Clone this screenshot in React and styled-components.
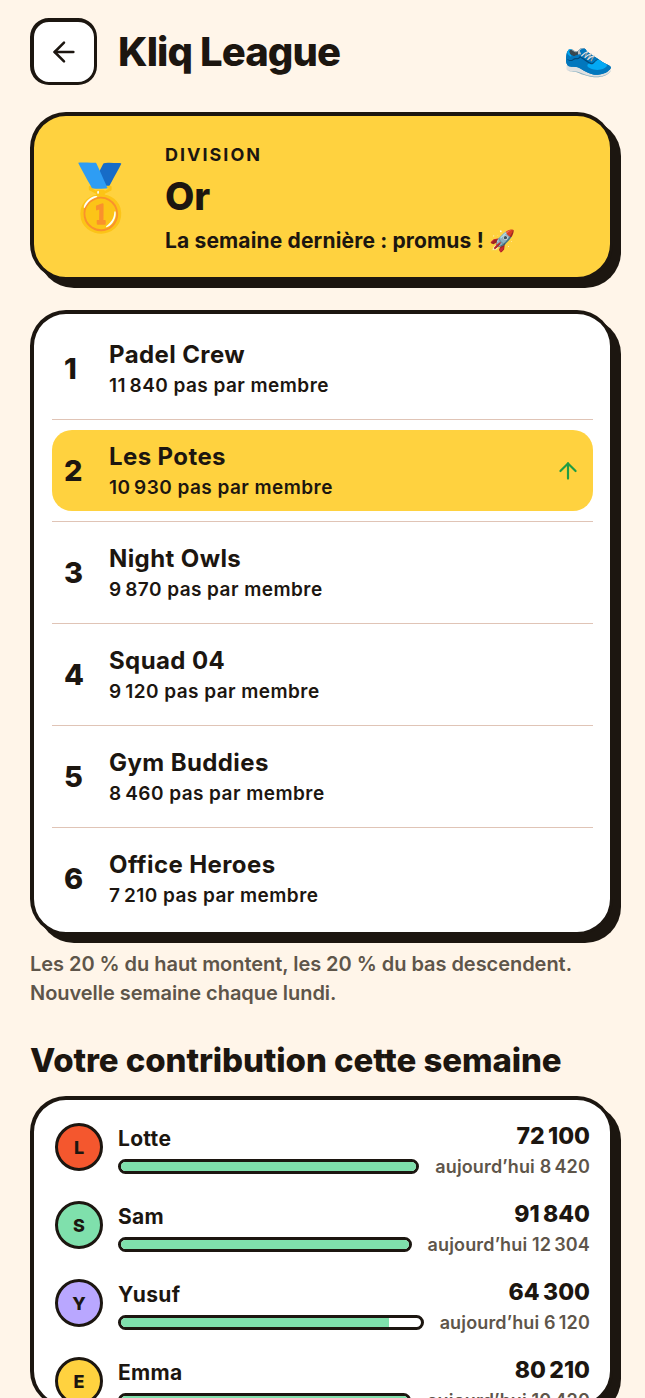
import React from "react";
import styled, { createGlobalStyle } from "styled-components";

const Global = createGlobalStyle`
  html, body { margin: 0; padding: 0; background: #fff5e9; height: 1398px; overflow: hidden; }
  body { font-family: "Inter", "Noto Sans", sans-serif; color: #1c1610; }
`;
const Page = styled.div`
  width: 583px; padding: 18px 0 0 30px; display: flex; flex-direction: column;
`;
const Header = styled.header`
  display: flex; align-items: center; gap: 21px; height: 67px; margin-bottom: 27px;
`;
const BackButton = styled.div`
  width: 67px; height: 67px; box-sizing: border-box; border: solid #1c1610; border-width: 4px 3px 3px 4px; border-radius: 19px;
  background: #fff; display: flex; align-items: center; justify-content: center;
`;
const Title = styled.h1`
  flex: 1; margin: 0; font-size: 40px; line-height: 48px; font-weight: 800; letter-spacing: -.9px;
`;
const Shoe = styled.div`
  font-size: 41px; line-height: 48px; margin-right: -1px; margin-top: 4px;
`;
const Card = styled.section`
  box-sizing: border-box; border: solid #1c1610; border-width: 4px 3px 3px 4px; border-radius: 36px;
  background: ${p => p.$bg || "#fff"}; box-shadow: 8px 8px 0 #1c1610;
`;
const DivisionCard = styled(Card)`
  height: 168px; display: flex; align-items: center; padding-left: 27px; gap: 34px; margin-bottom: 30px;
`;
const Medal = styled.div` font-size: 64px; line-height: 80px; width: 70px; text-align: center; `;
const DivisionText = styled.div` display: flex; flex-direction: column; padding-top: 7px; `;
const Eyebrow = styled.div` font-size: 18px; line-height: 24px; font-weight: 700; letter-spacing: 2px; `;
const DivisionName = styled.div` font-size: 38px; line-height: 58px; font-weight: 800; `;
const DivisionNote = styled.div` font-size: 21px; line-height: 32px; font-weight: 700; letter-spacing: .15px; `;
const RankCard = styled(Card)` padding: 14px 17px 13px 18px; margin-bottom: 15px; `;
const Row = styled.div`
  display: flex; align-items: center; height: 81px; padding: 0 12px 0 12px; border-radius: 20px;
  background: ${p => (p.$me ? "#ffd23f" : "transparent")};
`;
const Divider = styled.div` height: 1px; background: #e0c4b6; margin: 10px 0; `;
const Rank = styled.div` width: 45px; font-size: 29px; font-weight: 800; `;
const RowText = styled.div` flex: 1; padding-top: 3px; `;
const TeamName = styled.div` font-size: 24px; line-height: 31px; font-weight: 700; letter-spacing: .4px; `;
const TeamSteps = styled.div` font-size: 19px; line-height: 31px; font-weight: 600; letter-spacing: .45px; `;
const Note = styled.p`
  margin: 0 0 30px; font-size: 20px; line-height: 29px; font-weight: 600; letter-spacing: -.04px; color: #5e554a;
`;
const Heading = styled.h2`
  margin: 0 0 14px; font-size: 33px; line-height: 44px; font-weight: 800; letter-spacing: -.1px;
`;
const ContribCard = styled(Card)` padding: 22px 20px 0 21px; display: flex; flex-direction: column; gap: 30px; `;
const Person = styled.div` display: flex; align-items: flex-start; gap: 15px; height: 48px; `;
const Avatar = styled.div`
  width: 48px; height: 48px; box-sizing: border-box; flex: none; margin-top: 1px; border: 3px solid #1c1610; border-radius: 50%;
  background: ${p => p.$bg}; display: flex; align-items: center; justify-content: center;
  font-size: 18px; font-weight: 800;
`;
const PersonBody = styled.div` flex: 1; display: flex; flex-direction: column; gap: 2px; `;
const Line = styled.div` display: flex; align-items: center; justify-content: space-between; gap: 16px; height: 28px; `;
const Name = styled.div` font-size: 21px; font-weight: 700; padding-top: 4px; letter-spacing: .3px; `;
const Total = styled.div` font-size: 23px; font-weight: 800; `;
const Bar = styled.div`
  flex: 1; height: 15px; box-sizing: border-box; border: 3px solid #1c1610; border-radius: 8px; background: #fff; overflow: hidden;
`;
const Fill = styled.div` height: 100%; background: #7fe0ac; `;
const Today = styled.div` font-size: 18px; font-weight: 600; letter-spacing: .15px; color: #5e554a; white-space: nowrap; `;

const teams = [
  ["1", "Padel Crew", "11\u202f840"], ["2", "Les Potes", "10\u202f930", true], ["3", "Night Owls", "9\u202f870"],
  ["4", "Squad 04", "9\u202f120"], ["5", "Gym Buddies", "8\u202f460"], ["6", "Office Heroes", "7\u202f210"],
];
const people = [
  ["L", "Lotte", "72\u202f100", "8\u202f420", "#f4572e", 100], ["S", "Sam", "91\u202f840", "12\u202f304", "#7fe0ac", 100],
  ["Y", "Yusuf", "64\u202f300", "6\u202f120", "#b9a7ff", 89.3], ["E", "Emma", "80\u202f210", "10\u202f420", "#ffd23f", 100],
];

export default function App() {
  return (
    <Page>
      <Global />
      <Header>
        <BackButton>
          <svg width="32" height="32" viewBox="0 0 24 24" fill="none" stroke="#1c1610" strokeWidth="1.9" strokeLinecap="round" strokeLinejoin="round">
            <path d="m12 19-7-7 7-7" /><path d="M19 12H5" />
          </svg>
        </BackButton>
        <Title>Kliq League</Title>
        <Shoe>👟</Shoe>
      </Header>
      <DivisionCard $bg="#ffd23f">
        <Medal>🥇</Medal>
        <DivisionText>
          <Eyebrow>DIVISION</Eyebrow>
          <DivisionName>Or</DivisionName>
          <DivisionNote>La semaine dernière : promus ! 🚀</DivisionNote>
        </DivisionText>
      </DivisionCard>
      <RankCard>
        {teams.map(([r, n, s, me], i) => (
          <React.Fragment key={r}>
            {i > 0 && <Divider />}
            <Row $me={me}>
              <Rank>{r}</Rank>
              <RowText>
                <TeamName>{n}</TeamName>
                <TeamSteps>{s} pas par membre</TeamSteps>
              </RowText>
              {me && (
                <svg width="26" height="26" viewBox="0 0 24 24" fill="none" stroke="#1f9d45" strokeWidth="2" strokeLinecap="round" strokeLinejoin="round">
                  <path d="m5 12 7-7 7 7" /><path d="M12 19V5" />
                </svg>
              )}
            </Row>
          </React.Fragment>
        ))}
      </RankCard>
      <Note>Les 20 % du haut montent, les 20 % du bas descendent.<br />Nouvelle semaine chaque lundi.</Note>
      <Heading>Votre contribution cette semaine</Heading>
      <ContribCard>
        {people.map(([l, n, t, d, c, w]) => (
          <Person key={l}>
            <Avatar $bg={c}>{l}</Avatar>
            <PersonBody>
              <Line><Name>{n}</Name><Total>{t}</Total></Line>
              <Line><Bar><Fill style={{ width: `${w}%` }} /></Bar><Today>aujourd’hui {d}</Today></Line>
            </PersonBody>
          </Person>
        ))}
      </ContribCard>
    </Page>
  );
}
